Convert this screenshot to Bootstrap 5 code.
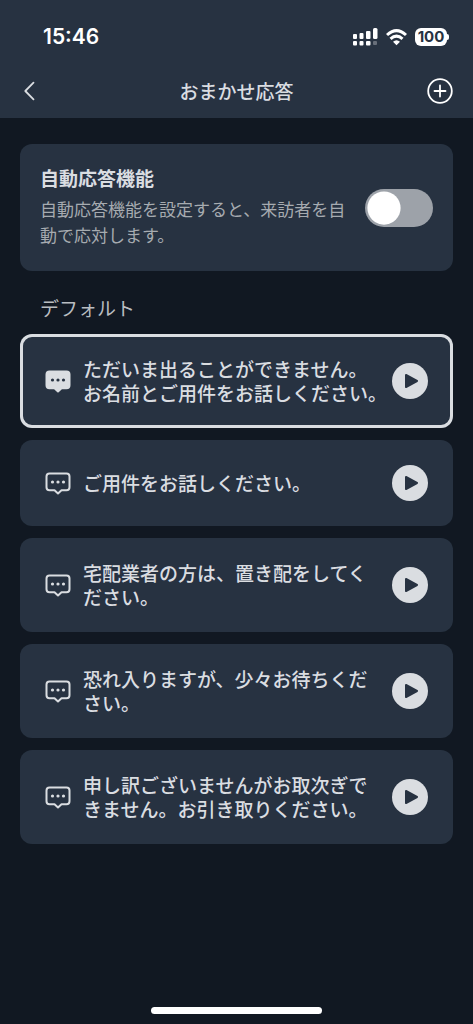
<!DOCTYPE html>
<html lang="ja" data-bs-theme="dark">
<head>
<meta charset="utf-8">
<meta name="viewport" content="width=device-width, initial-scale=1">
<title>おまかせ応答</title>
<link href="https://cdn.jsdelivr.net/npm/bootstrap@5.3.0/dist/css/bootstrap.min.css" rel="stylesheet">
<style>
  :root { --ink: #dadde1; --panel: #273241; --page: #111822; --muted: #a6abb0; }
  body {
    background: var(--page);
    color: var(--ink);
    font-family: "Noto Sans CJK JP", sans-serif;
    font-size: 19px;
    line-height: 24px;
  }
  svg { display: block; flex: none; }
  .top-area { background: var(--panel); }
  .status-bar { height: 64px; padding: 10px 24px 0 43px; color: #fff; font-family: Inter, sans-serif; }
  .clock { font-size: 21px; line-height: 26px; font-weight: 600; }
  .battery { width: 32px; height: 18px; border-radius: 6px; background: #fff; color: var(--panel); font-size: 15px; font-weight: 700; line-height: 18px; text-align: center; }
  .battery-tip { width: 2px; height: 6px; border-radius: 0 2px 2px 0; background: #fff; }
  .title-bar { height: 54px; padding: 0 20px; }
  .title-bar h1 { font-size: 19px; line-height: 24px; font-weight: 500; color: var(--ink); }
  .icon-button { background: none; border: 0; padding: 0; color: var(--ink); width: 40px; height: 40px; }
  main { padding: 26px 20px 0; }
  .panel { background: var(--panel); border-radius: 12px; }
  .auto-panel { padding: 18px 20px; min-height: 127px; gap: 18px; }
  .auto-text { padding-bottom: 4px; }
  .auto-text label { font-weight: 700; line-height: 28px; margin-bottom: 4px; }
  .auto-text p { font-size: 17px; line-height: 26px; color: var(--muted); }
  .form-check-input.toggle {
    width: 68px; height: 38px; border: 0; border-radius: 19px;
    background-color: #9da2a9;
    background-size: 38px 38px;
    --bs-form-switch-bg: url("data:image/svg+xml,%3csvg xmlns='http://www.w3.org/2000/svg' viewBox='-4 -4 8 8'%3e%3ccircle r='3.5' fill='white'/%3e%3c/svg%3e") !important;
  }
  .section-title { font-size: 19px; line-height: 28px; font-weight: 400; color: #b9bdc1; padding: 23px 20px 12px; }
  .reply-list { gap: 12px; }
  .reply { min-height: 86px; padding: 23px 25px; gap: 16px; }
  .reply:has(input:checked) { box-shadow: inset 0 0 0 3px var(--ink); }
  .reply label { gap: 12px; font-weight: 500; min-width: 0; }
  .two-lines { white-space: pre; }
  .chat-icon { fill: none; stroke: var(--ink); stroke-width: 2px; stroke-linejoin: round; }
  .chat-icon .dots { fill: var(--ink); stroke: none; }
  .reply input:checked ~ svg .bubble { fill: var(--ink); }
  .reply input:checked ~ svg .dots { fill: var(--panel); }
  .play-button { width: 36px; height: 36px; background: var(--ink); color: var(--panel); border: 0; border-radius: 50%; padding: 0; flex: none; }
  .home-bar { width: 36%; height: 7px; border-radius: 4px; background: #fff; margin-bottom: 10px; }
</style>
</head>
<body class="min-vh-100 d-flex flex-column">
<header class="top-area">
  <div class="status-bar d-flex align-items-center justify-content-between">
    <span class="clock">15:46</span>
    <div class="d-flex align-items-center">
      <svg width="26" height="18" viewBox="0 0 26 18" fill="#fff" class="me-2" aria-hidden="true">
        <rect x="1" y="6" width="4" height="5" rx="1"/><rect x="7.500" y="5" width="4" height="6" rx="1"/><rect x="14" y="3" width="4.500" height="8" rx="1"/><rect x="21" y="0" width="4.500" height="11" rx="1.500"/>
        <rect x="1" y="13" width="4" height="4.500" rx="1"/><rect x="7.500" y="13" width="4" height="4.500" rx="1"/><rect x="14" y="13" width="4.500" height="4.500" rx="1"/><rect x="21" y="13" width="4" height="4" rx="1" opacity=".3"/>
      </svg>
      <svg width="21" height="17" viewBox="0 0 21 17" class="me-2" fill="none" stroke="#fff" stroke-width="3" aria-hidden="true">
        <path d="M1 6Q10.500-2.800 20 6"/><path d="M4.500 9.900Q10.500 4.400 16.500 9.900"/><path d="M7 12.800Q10.500 9.800 14 12.800L10.500 16.300Z" fill="#fff" stroke="none"/>
      </svg>
      <span class="battery">100</span><span class="battery-tip"></span>
    </div>
  </div>
  <div class="title-bar d-flex align-items-center justify-content-between">
    <button class="icon-button" type="button" aria-label="戻る">
      <svg width="18" height="20" viewBox="0 0 18 20" fill="none" stroke="currentColor" stroke-width="1.800" stroke-linecap="round" stroke-linejoin="round"><path d="M13.500 1.700L5.300 10L13.500 18.300"/></svg>
    </button>
    <h1 class="mb-0">おまかせ応答</h1>
    <button class="icon-button d-flex align-items-center justify-content-end" type="button" aria-label="追加">
      <svg width="26" height="26" viewBox="0 0 26 26" fill="none" stroke="#fff" stroke-width="1.800" stroke-linecap="round"><circle cx="13" cy="13" r="11.800"/><path d="M7.500 13H18.500M13 7.500V18.500"/></svg>
    </button>
  </div>
</header>
<main>
  <section class="panel auto-panel d-flex align-items-center">
    <div class="auto-text flex-grow-1">
      <label for="auto-reply" class="d-block">自動応答機能</label>
      <p class="mb-0" id="auto-help">自動応答機能を設定すると、来訪者を自動で応対します。</p>
    </div>
    <div class="form-check form-switch p-0 m-0 flex-shrink-0">
      <input class="form-check-input toggle d-block m-0" type="checkbox" role="switch" id="auto-reply" aria-describedby="auto-help">
    </div>
  </section>
  <h2 class="section-title mb-0">デフォルト</h2>
  <div class="reply-list d-flex flex-column" role="radiogroup" aria-label="デフォルト">
    <div class="panel reply d-flex align-items-center">
      <label class="d-flex align-items-center flex-grow-1 position-relative">
        <input class="visually-hidden" type="radio" name="reply" checked>
        <svg class="chat-icon" width="26" height="24" viewBox="0 0 26 24"><path class="bubble" d="M4.500 2.500H21.500Q24.500 2.500 24.500 5.500V16.300Q24.500 19.300 21.500 19.300H16.500L13 22.500L9.500 19.300H4.500Q1.500 19.300 1.500 16.300V5.500Q1.500 2.500 4.500 2.500Z"/><g class="dots"><circle cx="7.500" cy="11" r="1.600"/><circle cx="13" cy="11" r="1.600"/><circle cx="18.500" cy="11" r="1.600"/></g></svg>
        <span class="two-lines">ただいま出ることができません。
お名前とご用件をお話しください。</span>
      </label>
      <button class="play-button" type="button" aria-label="再生"><svg width="36" height="36" viewBox="0 0 36 36"><path d="M14 12L25 18L14 24Z" fill="currentColor" stroke="currentColor" stroke-width="2" stroke-linejoin="round"/></svg></button>
    </div>
    <div class="panel reply d-flex align-items-center">
      <label class="d-flex align-items-center flex-grow-1 position-relative">
        <input class="visually-hidden" type="radio" name="reply">
        <svg class="chat-icon" width="26" height="24" viewBox="0 0 26 24"><path class="bubble" d="M4.500 2.500H21.500Q24.500 2.500 24.500 5.500V16.300Q24.500 19.300 21.500 19.300H16.500L13 22.500L9.500 19.300H4.500Q1.500 19.300 1.500 16.300V5.500Q1.500 2.500 4.500 2.500Z"/><g class="dots"><circle cx="7.500" cy="11" r="1.600"/><circle cx="13" cy="11" r="1.600"/><circle cx="18.500" cy="11" r="1.600"/></g></svg>
        <span>ご用件をお話しください。</span>
      </label>
      <button class="play-button" type="button" aria-label="再生"><svg width="36" height="36" viewBox="0 0 36 36"><path d="M14 12L25 18L14 24Z" fill="currentColor" stroke="currentColor" stroke-width="2" stroke-linejoin="round"/></svg></button>
    </div>
    <div class="panel reply d-flex align-items-center">
      <label class="d-flex align-items-center flex-grow-1 position-relative">
        <input class="visually-hidden" type="radio" name="reply">
        <svg class="chat-icon" width="26" height="24" viewBox="0 0 26 24"><path class="bubble" d="M4.500 2.500H21.500Q24.500 2.500 24.500 5.500V16.300Q24.500 19.300 21.500 19.300H16.500L13 22.500L9.500 19.300H4.500Q1.500 19.300 1.500 16.300V5.500Q1.500 2.500 4.500 2.500Z"/><g class="dots"><circle cx="7.500" cy="11" r="1.600"/><circle cx="13" cy="11" r="1.600"/><circle cx="18.500" cy="11" r="1.600"/></g></svg>
        <span>宅配業者の方は、置き配をしてください。</span>
      </label>
      <button class="play-button" type="button" aria-label="再生"><svg width="36" height="36" viewBox="0 0 36 36"><path d="M14 12L25 18L14 24Z" fill="currentColor" stroke="currentColor" stroke-width="2" stroke-linejoin="round"/></svg></button>
    </div>
    <div class="panel reply d-flex align-items-center">
      <label class="d-flex align-items-center flex-grow-1 position-relative">
        <input class="visually-hidden" type="radio" name="reply">
        <svg class="chat-icon" width="26" height="24" viewBox="0 0 26 24"><path class="bubble" d="M4.500 2.500H21.500Q24.500 2.500 24.500 5.500V16.300Q24.500 19.300 21.500 19.300H16.500L13 22.500L9.500 19.300H4.500Q1.500 19.300 1.500 16.300V5.500Q1.500 2.500 4.500 2.500Z"/><g class="dots"><circle cx="7.500" cy="11" r="1.600"/><circle cx="13" cy="11" r="1.600"/><circle cx="18.500" cy="11" r="1.600"/></g></svg>
        <span>恐れ入りますが、少々お待ちください。</span>
      </label>
      <button class="play-button" type="button" aria-label="再生"><svg width="36" height="36" viewBox="0 0 36 36"><path d="M14 12L25 18L14 24Z" fill="currentColor" stroke="currentColor" stroke-width="2" stroke-linejoin="round"/></svg></button>
    </div>
    <div class="panel reply d-flex align-items-center">
      <label class="d-flex align-items-center flex-grow-1 position-relative">
        <input class="visually-hidden" type="radio" name="reply">
        <svg class="chat-icon" width="26" height="24" viewBox="0 0 26 24"><path class="bubble" d="M4.500 2.500H21.500Q24.500 2.500 24.500 5.500V16.300Q24.500 19.300 21.500 19.300H16.500L13 22.500L9.500 19.300H4.500Q1.500 19.300 1.500 16.300V5.500Q1.500 2.500 4.500 2.500Z"/><g class="dots"><circle cx="7.500" cy="11" r="1.600"/><circle cx="13" cy="11" r="1.600"/><circle cx="18.500" cy="11" r="1.600"/></g></svg>
        <span>申し訳ございませんがお取次ぎできません。お引き取りください。</span>
      </label>
      <button class="play-button" type="button" aria-label="再生"><svg width="36" height="36" viewBox="0 0 36 36"><path d="M14 12L25 18L14 24Z" fill="currentColor" stroke="currentColor" stroke-width="2" stroke-linejoin="round"/></svg></button>
    </div>
  </div>
</main>
<div class="home-bar mx-auto mt-auto"></div>
<script src="https://cdn.jsdelivr.net/npm/bootstrap@5.3.0/dist/js/bootstrap.bundle.min.js"></script>
</body>
</html>
